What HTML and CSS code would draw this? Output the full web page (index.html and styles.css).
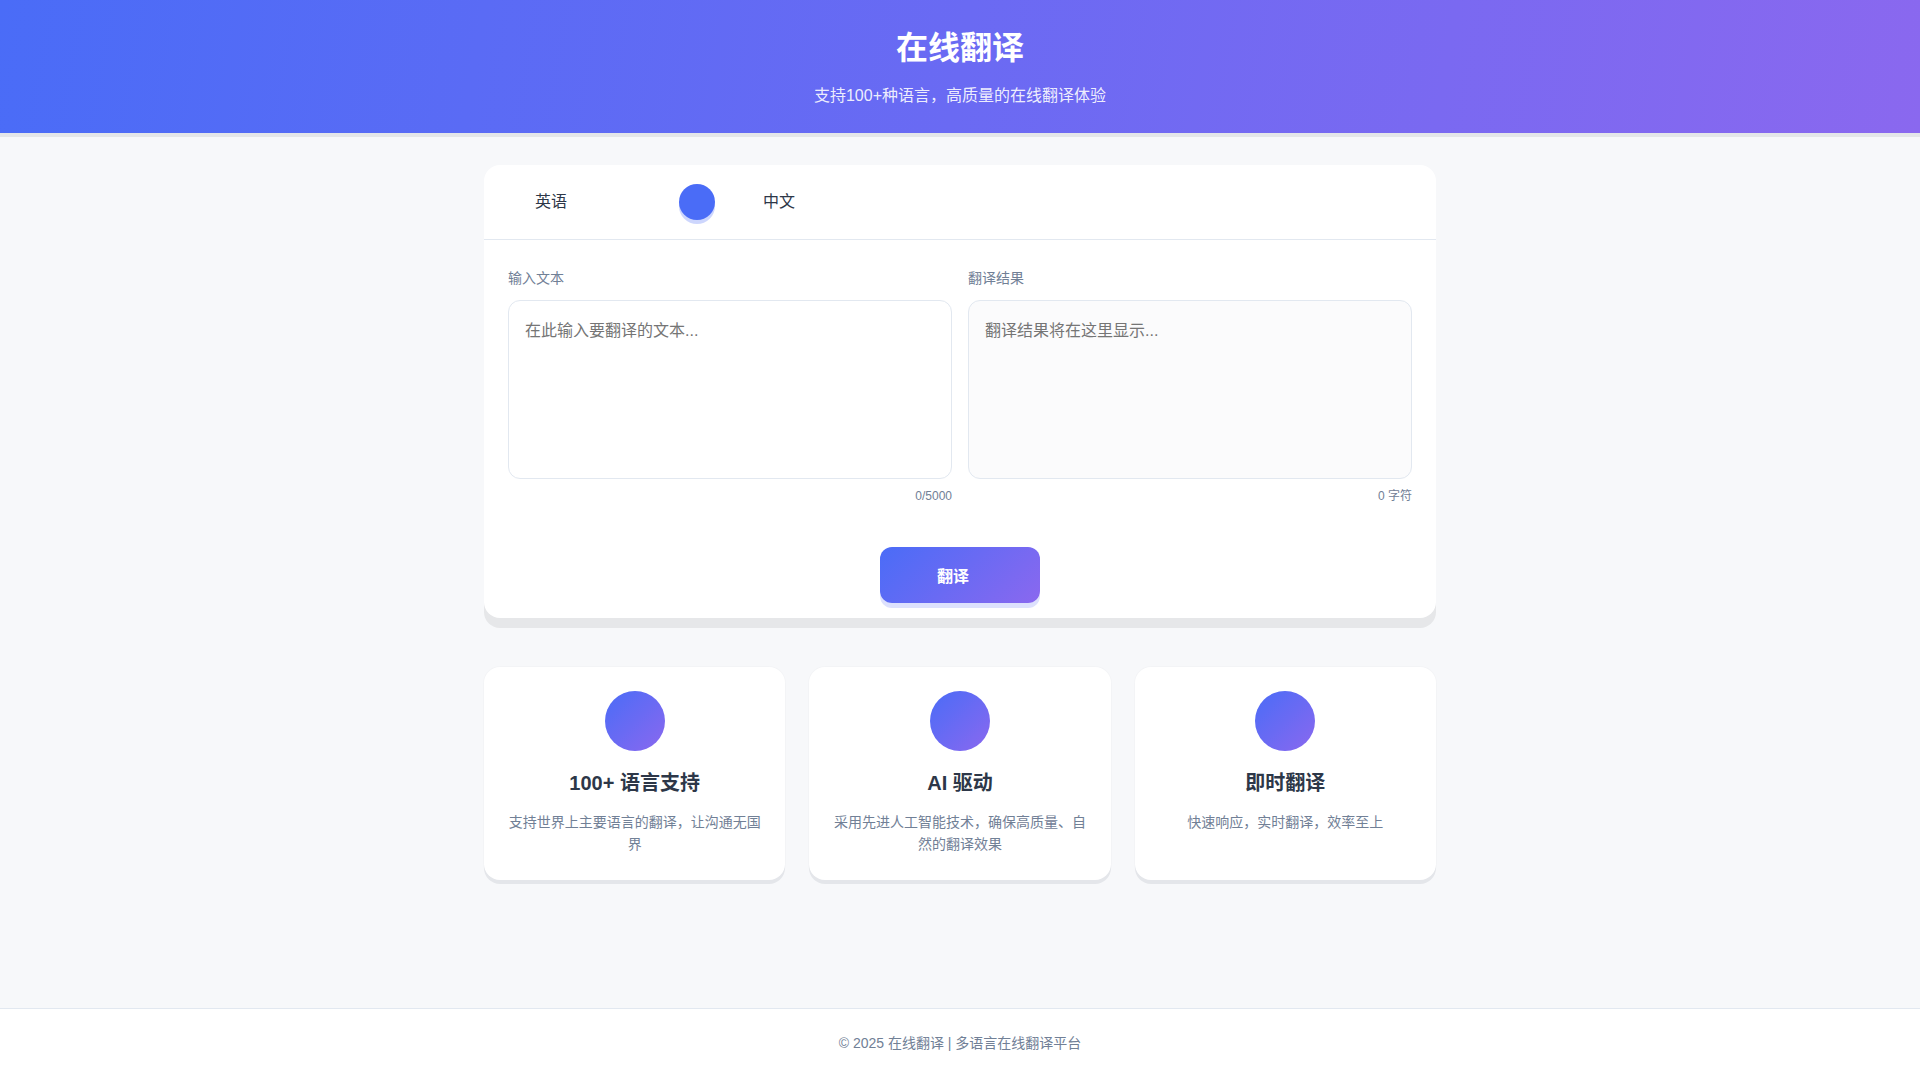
FILE: index.html
```html
<!DOCTYPE html>
<html lang="zh-CN">
<head>
<meta charset="UTF-8">
<title>在线翻译</title>
<link rel="stylesheet" href="styles.css">
</head>
<body>
<header class="site-header">
  <h1 class="site-title">在线翻译</h1>
  <p class="site-subtitle">支持100+种语言，高质量的在线翻译体验</p>
</header>

<main class="main">
  <section class="translator">
    <div class="lang-bar">
      <div class="lang lang-source">英语</div>
      <button class="swap-btn" type="button" aria-label="交换语言"></button>
      <div class="lang lang-target">中文</div>
    </div>
    <div class="panels">
      <div class="panel">
        <label class="panel-label">输入文本</label>
        <textarea class="text-box" placeholder="在此输入要翻译的文本..."></textarea>
        <div class="counter">0/5000</div>
      </div>
      <div class="panel">
        <label class="panel-label">翻译结果</label>
        <textarea class="text-box text-box-result" readonly placeholder="翻译结果将在这里显示..."></textarea>
        <div class="counter">0 字符</div>
      </div>
    </div>
    <div class="actions">
      <button class="translate-btn" type="button">翻译</button>
    </div>
  </section>

  <section class="features">
    <div class="feature">
      <div class="feature-icon"></div>
      <h3 class="feature-title">100+ 语言支持</h3>
      <p class="feature-desc">支持世界上主要语言的翻译，让沟通无国界</p>
    </div>
    <div class="feature">
      <div class="feature-icon"></div>
      <h3 class="feature-title">AI 驱动</h3>
      <p class="feature-desc">采用先进人工智能技术，确保高质量、自然的翻译效果</p>
    </div>
    <div class="feature">
      <div class="feature-icon"></div>
      <h3 class="feature-title">即时翻译</h3>
      <p class="feature-desc">快速响应，实时翻译，效率至上</p>
    </div>
  </section>
</main>

<footer class="site-footer">© 2025 在线翻译 | 多语言在线翻译平台</footer>
</body>
</html>
```

FILE: styles.css
```css
* { box-sizing: border-box; }

html, body { margin: 0; padding: 0; }

body {
  min-height: 100vh;
  display: flex;
  flex-direction: column;
  background: #f7f8fa;
  font-family: "Liberation Sans", "Noto Sans CJK SC", sans-serif;
  color: #2d3748;
}

.site-header {
  background: linear-gradient(100deg, #4a6cf7 0%, #8a68ef 100%);
  color: #fff;
  text-align: center;
  padding: 29px 0 26px;
  box-shadow: 0 4px 0 #e4e6e9;
  height: 133px;
}

.site-title {
  margin: 0;
  font-size: 32px;
  line-height: 38px;
  font-weight: 700;
}

.site-subtitle {
  margin: 17px 0 0;
  font-size: 16px;
  line-height: 24px;
  color: rgba(255, 255, 255, 0.9);
}

.main {
  flex: 1;
  width: 952px;
  margin: 0 auto;
  padding-top: 32px;
}

.translator {
  background: #fff;
  border-radius: 16px;
  box-shadow: 0 10px 0 #e6e7e9;
}

.lang-bar {
  height: 75px;
  display: flex;
  align-items: center;
  padding-left: 51px;
  border-bottom: 1px solid #e2e8f0;
}

.lang {
  font-size: 16px;
  line-height: 20px;
  color: #2d3748;
}

.lang-source { width: 144px; }

.swap-btn {
  width: 36px;
  height: 36px;
  border: none;
  padding: 0;
  border-radius: 50%;
  background: #4a6cf7;
  box-shadow: 0 4px 0 rgba(74, 108, 247, 0.28);
  margin-top: -1px;
}

.lang-target { margin-left: 48px; }

.panels {
  display: grid;
  grid-template-columns: 1fr 1fr;
  gap: 16px;
  padding: 28px 24px 0;
}

.panel {
  display: flex;
  flex-direction: column;
}

.panel-label {
  font-size: 14px;
  line-height: 21px;
  color: #718096;
  margin-bottom: 11px;
}

.text-box {
  height: 179px;
  border: 1px solid #e2e8f0;
  border-radius: 12px;
  padding: 17px 16px;
  font-family: "Liberation Sans", "Noto Sans CJK SC", sans-serif;
  font-size: 16px;
  line-height: 1.6;
  color: #2d3748;
  background: #fff;
  resize: none;
  outline: none;
}

.text-box::placeholder { color: #757575; }

.text-box-result { background: #fbfbfc; }

.counter {
  margin-top: 8px;
  text-align: right;
  font-size: 12px;
  line-height: 18px;
  color: #718096;
}

.actions {
  display: flex;
  justify-content: center;
  padding: 42px 0 15px;
}

.translate-btn {
  width: 160px;
  height: 56px;
  border: none;
  border-radius: 12px;
  background: linear-gradient(135deg, #4a6cf7 0%, #8a68ef 100%);
  color: #fff;
  font-family: "Liberation Sans", "Noto Sans CJK SC", sans-serif;
  font-size: 16px;
  font-weight: 700;
  padding: 0 14px 0 0;
  box-shadow: 0 5px 0 #dde1fd;
}

.features {
  display: grid;
  grid-template-columns: repeat(3, 1fr);
  gap: 24px;
  margin-top: 49px;
}

.feature {
  background: #fff;
  border-radius: 16px;
  padding: 24px 24px 24px;
  text-align: center;
  box-shadow: 0 4px 0 #e4e6ea, 0 0 0 1px rgba(0, 0, 0, 0.015);
}

.feature-icon {
  width: 60px;
  height: 60px;
  border-radius: 50%;
  margin: 0 auto 16px;
  background: linear-gradient(135deg, #4a6cf7 0%, #8a68ef 100%);
}

.feature-title {
  margin: 0 0 12px;
  font-size: 20px;
  line-height: 32px;
  font-weight: 700;
  color: #2d3748;
}

.feature-desc {
  margin: 0;
  font-size: 14px;
  line-height: 1.6;
  color: #718096;
}

.site-footer {
  height: 72px;
  background: #fff;
  border-top: 1px solid #e2e8f0;
  display: flex;
  align-items: center;
  justify-content: center;
  padding-bottom: 5px;
  font-size: 14px;
  color: #718096;
}
```
